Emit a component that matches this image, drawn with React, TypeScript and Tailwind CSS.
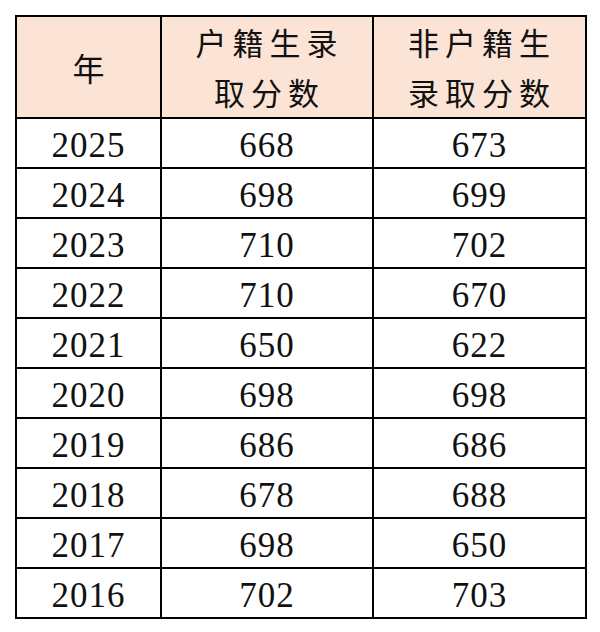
import React from "react";

const rows: [string, string, string][] = [
  ["2025", "668", "673"],
  ["2024", "698", "699"],
  ["2023", "710", "702"],
  ["2022", "710", "670"],
  ["2021", "650", "622"],
  ["2020", "698", "698"],
  ["2019", "686", "686"],
  ["2018", "678", "688"],
  ["2017", "698", "650"],
  ["2016", "702", "703"],
];

export default function App() {
  return (
    <div className="min-h-[632px] w-[600px] bg-white pl-[15px] pt-[15px]">
      <table className="w-[571px] table-fixed border-collapse border-2 border-black text-[#111]">
        <colgroup>
          <col className="w-[145px]" />
          <col className="w-[212px]" />
          <col className="w-[213px]" />
        </colgroup>
        <thead>
          <tr className="h-[101px] bg-[#fbe4d6] font-['Noto_Sans_CJK_SC']">
            <th className="border-2 border-black text-center text-[32px] font-normal">年</th>
            <th className="border-2 border-black pl-[5px] text-center text-[31px] font-normal leading-[50px] tracking-[6px]">
              户籍生录
              <br />
              取分数
            </th>
            <th className="border-2 border-black pl-[5px] text-center text-[31px] font-normal leading-[50px] tracking-[6px]">
              非户籍生
              <br />
              录取分数
            </th>
          </tr>
        </thead>
        <tbody>
          {rows.map(([year, a, b]) => (
            <tr key={year} className="h-[50px]">
              <td className="border-2 border-black pt-[5px] text-center font-['Liberation_Serif'] text-[35px] leading-none tracking-[1px]">
                {year}
              </td>
              <td className="border-2 border-black pt-[5px] text-center [font-family:Liberation_Serif] text-[35px] leading-none tracking-[1px]">
                {a}
              </td>
              <td className="border-2 border-black pt-[5px] text-center font-[Liberation_Serif,serif] text-[35px] leading-none tracking-[1px]">
                {b}
              </td>
            </tr>
          ))}
        </tbody>
      </table>
    </div>
  );
}
